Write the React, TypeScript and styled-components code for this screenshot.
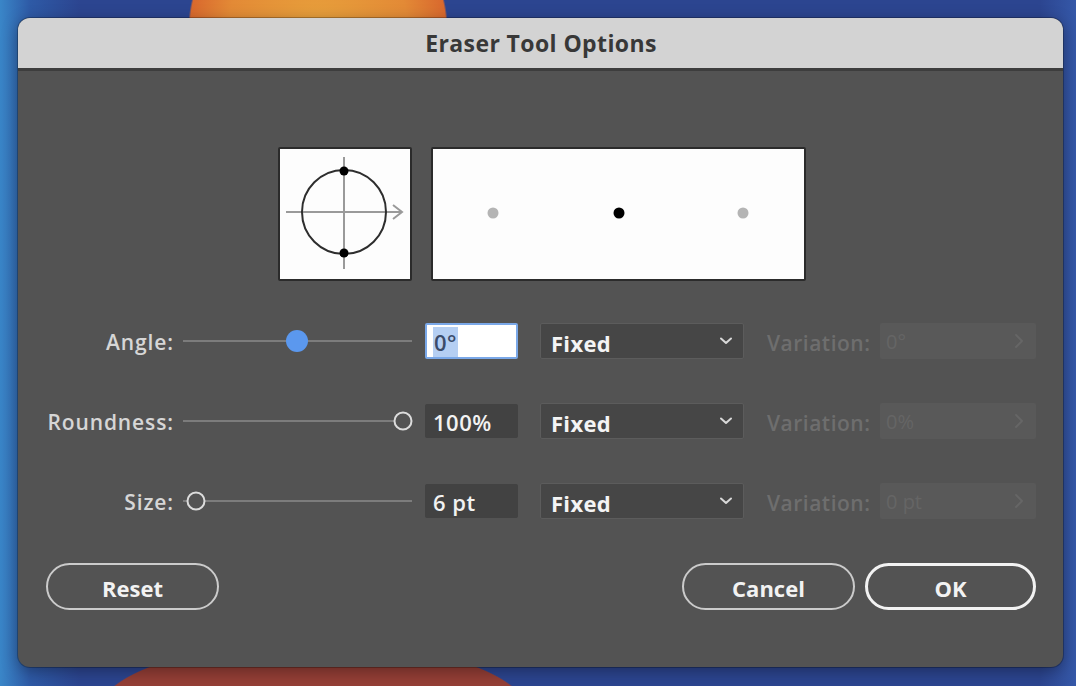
import styled, { createGlobalStyle } from "styled-components";

const GlobalStyle = createGlobalStyle`
  html, body {
    margin: 0;
    padding: 0;
  }
  body {
    font-family: "Open Sans", "DejaVu Sans", sans-serif;
    background: #2c4590;
  }
`;

const Desktop = styled.div`
  width: 1076px;
  height: 686px;
  box-sizing: border-box;
  padding: 18px 0 0 18px;
  overflow: hidden;
  background:
    radial-gradient(circle at 318px 30px, #e8a23c 0, #e38a36 90px, #d9692e 128px, transparent 130px),
    radial-gradient(ellipse 215px 70px at 313px 712px, #953f36 0, #953f36 99%, transparent 100%),
    linear-gradient(90deg, #3a86c8 0, #2e5aa6 30px, #2c4590 80px, #2c4590 1040px, #3558a8 1076px);
`;

const Dialog = styled.div`
  width: 1045px;
  height: 649px;
  border-radius: 12px;
  overflow: hidden;
  background: #535353;
  box-shadow: 0 0 0 1px rgba(0, 0, 0, 0.25), 0 4px 16px rgba(0, 0, 0, 0.35);
  display: flex;
  flex-direction: column;
`;

const TitleBar = styled.div`
  height: 50px;
  flex: none;
  background: #d3d3d3;
  border-bottom: 3px solid #3d3d3d;
  display: flex;
  align-items: center;
  justify-content: center;
  font-size: 23px;
  font-weight: 700;
  letter-spacing: 0.4px;
  color: #383838;
  padding-left: 1px;
`;

const Body = styled.div`
  flex: 1;
  padding: 76px 27px 0 28px;
  display: flex;
  flex-direction: column;
`;

const PreviewRow = styled.div`
  display: flex;
  justify-content: center;
  gap: 19px;
  padding-left: 1px;
`;

const PreviewBox = styled.div<{ $w: number }>`
  width: ${(p) => p.$w}px;
  height: 134px;
  box-sizing: border-box;
  border: 2px solid #2b2b2b;
  border-radius: 2px;
  background: #fdfdfd;
  svg {
    display: block;
  }
`;

const Rows = styled.div`
  margin-top: 42px;
  display: flex;
  flex-direction: column;
  gap: 44px;
`;

const Row = styled.div`
  display: flex;
  align-items: center;
  height: 36px;
`;

const Label = styled.div`
  width: 128px;
  padding-top: 2px;
  text-align: right;
  font-size: 21px;
  font-weight: 600;
  letter-spacing: 0.9px;
  color: #d6d6d6;
  white-space: nowrap;
`;

const Slider = styled.div`
  position: relative;
  width: 229px;
  height: 36px;
  margin-left: 9px;
  display: flex;
  align-items: center;
  &::before {
    content: "";
    display: block;
    width: 100%;
    height: 2px;
    background: #7c7c7c;
  }
`;

const Thumb = styled.div<{ $filled?: boolean }>`
  position: absolute;
  top: 50%;
  width: ${(p) => (p.$filled ? 22 : 19)}px;
  height: ${(p) => (p.$filled ? 22 : 19)}px;
  box-sizing: border-box;
  border-radius: 50%;
  transform: translate(-50%, -50%);
  background: ${(p) => (p.$filled ? "#5b98ee" : "#535353")};
  border: ${(p) => (p.$filled ? "none" : "2.5px solid #dcdcdc")};
`;

const ValueBox = styled.div<{ $focus?: boolean }>`
  width: 93px;
  height: ${(p) => (p.$focus ? 36 : 34)}px;
  margin-left: 13px;
  box-sizing: border-box;
  display: flex;
  align-items: center;
  padding-left: ${(p) => (p.$focus ? 6 : 8)}px;
  padding-top: 2px;
  font-size: 22px;
  font-weight: 600;
  letter-spacing: 0.5px;
  background: ${(p) => (p.$focus ? "#ffffff" : "#424242")};
  color: ${(p) => (p.$focus ? "#3b4c6a" : "#f2f2f2")};
  border: ${(p) => (p.$focus ? "2px solid #7aa8e8" : "none")};
  border-radius: 2px;
`;

const Selected = styled.span`
  background: #b5cff3;
  padding: 0 1px;
`;

const Dropdown = styled.div`
  width: 204px;
  height: 36px;
  margin-left: 22px;
  box-sizing: border-box;
  background: #464646;
  border: 1px solid #5c5c5c;
  border-radius: 2px;
  display: flex;
  align-items: center;
  justify-content: space-between;
  padding: 3px 10px 0 10px;
  font-size: 22px;
  font-weight: 700;
  letter-spacing: 0.3px;
  color: #f4f4f4;
  svg {
    display: block;
    margin-top: -3px;
  }
`;

const VarLabel = styled.div`
  margin-left: 23px;
  width: 103px;
  padding-top: 3px;
  font-size: 21px;
  font-weight: 600;
  letter-spacing: 0.5px;
  color: #6e6e6e;
  white-space: nowrap;
`;

const VarBox = styled.div`
  width: 156px;
  height: 36px;
  margin-left: 10px;
  box-sizing: border-box;
  background: #595959;
  border-radius: 2px;
  display: flex;
  align-items: center;
  justify-content: space-between;
  padding: 0 12px 0 6px;
  font-size: 20px;
  color: #656565;
  svg {
    display: block;
  }
`;

const Footer = styled.div`
  margin-top: 44px;
  display: flex;
  align-items: center;
`;

const Spacer = styled.div`
  flex: 1;
`;

const PillButton = styled.button<{ $primary?: boolean; $w: number }>`
  width: ${(p) => p.$w}px;
  height: 47px;
  margin-left: ${(p) => (p.$primary ? 10 : 0)}px;
  border-radius: 24px;
  background: transparent;
  border: ${(p) => (p.$primary ? "3px solid #f2f2f2" : "2px solid #cbcbcb")};
  color: #f2f2f2;
  font-family: inherit;
  font-size: 22px;
  font-weight: 700;
  padding: 2px 0 0;
`;

const Chevron = () => (
  <svg width="14" height="10" viewBox="0 0 14 10">
    <path d="M2 2.5 L7 7 L12 2.5" fill="none" stroke="#d8d8d8" strokeWidth="2" strokeLinecap="round" strokeLinejoin="round" />
  </svg>
);

const RightArrow = () => (
  <svg width="10" height="16" viewBox="0 0 10 16">
    <path d="M2 2 L8 8 L2 14" fill="none" stroke="#666" strokeWidth="1.8" strokeLinecap="round" strokeLinejoin="round" />
  </svg>
);

const AngleDiagram = () => (
  <svg width="130" height="130" viewBox="0 0 130 130">
    <line x1="64" y1="8" x2="64" y2="120" stroke="#9a9a9a" strokeWidth="2" />
    <line x1="6" y1="63" x2="122" y2="63" stroke="#9a9a9a" strokeWidth="2" />
    <path d="M113 56 L122 63 L113 70" fill="none" stroke="#9a9a9a" strokeWidth="2" />
    <circle cx="64" cy="63" r="42" fill="none" stroke="#2e2e2e" strokeWidth="2" />
    <circle cx="64" cy="22" r="4.5" fill="#000" />
    <circle cx="64" cy="104" r="4.5" fill="#000" />
  </svg>
);

const SizeDiagram = () => (
  <svg width="371" height="130" viewBox="0 0 371 130">
    <circle cx="60" cy="64" r="5.5" fill="#b4b4b4" />
    <circle cx="186" cy="64" r="5.5" fill="#000" />
    <circle cx="310" cy="64" r="5.5" fill="#b4b4b4" />
  </svg>
);

interface RowData {
  label: string;
  value: string;
  thumb: number;
  filled?: boolean;
  focus?: boolean;
  variation: string;
}

const rows: RowData[] = [
  { label: "Angle:", value: "0°", thumb: 114, filled: true, focus: true, variation: "0°" },
  { label: "Roundness:", value: "100%", thumb: 220, variation: "0%" },
  { label: "Size:", value: "6 pt", thumb: 13, variation: "0 pt" },
];

const App = () => {
  return (
    <>
      <GlobalStyle />
      <Desktop>
        <Dialog>
          <TitleBar>Eraser Tool Options</TitleBar>
          <Body>
            <PreviewRow>
              <PreviewBox $w={134}>
                <AngleDiagram />
              </PreviewBox>
              <PreviewBox $w={375}>
                <SizeDiagram />
              </PreviewBox>
            </PreviewRow>
            <Rows>
              {rows.map((r) => (
                <Row key={r.label}>
                  <Label>{r.label}</Label>
                  <Slider>
                    <Thumb $filled={r.filled} style={{ left: r.thumb }} />
                  </Slider>
                  <ValueBox $focus={r.focus}>
                    {r.focus ? <Selected>{r.value}</Selected> : r.value}
                  </ValueBox>
                  <Dropdown>
                    Fixed
                    <Chevron />
                  </Dropdown>
                  <VarLabel>Variation:</VarLabel>
                  <VarBox>
                    {r.variation}
                    <RightArrow />
                  </VarBox>
                </Row>
              ))}
            </Rows>
            <Footer>
              <PillButton $w={173}>Reset</PillButton>
              <Spacer />
              <PillButton $w={173}>Cancel</PillButton>
              <PillButton $w={171} $primary>
                OK
              </PillButton>
            </Footer>
          </Body>
        </Dialog>
      </Desktop>
    </>
  );
};

export default App;
